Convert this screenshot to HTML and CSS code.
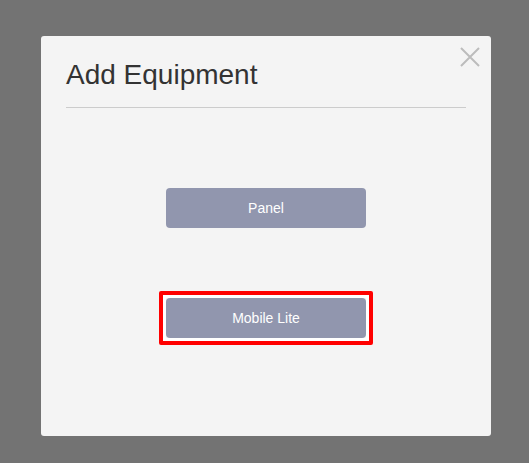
FILE: index.html
```html
<!DOCTYPE html>
<html>
<head>
<meta charset="utf-8">
<link rel="stylesheet" href="styles.css">
</head>
<body>
<div class="modal">
  <button class="close" aria-label="Close">
    <svg width="20" height="20" viewBox="0 0 20 20"><path d="M1 1 L19 19 M19 1 L1 19" stroke="#bcbcbc" stroke-width="2" fill="none"/></svg>
  </button>
  <div class="header"><h1 class="title">Add Equipment</h1></div>
  <div class="actions">
    <button class="btn">Panel</button>
    <button class="btn focused">Mobile Lite</button>
  </div>
</div>
</body>
</html>
```
FILE: styles.css
```css
html, body { margin: 0; height: 100%; }
body {
  background: #737373;
  font-family: "Liberation Sans", Arial, sans-serif;
  padding: 36px 0 0 41px;
  box-sizing: border-box;
}
.modal {
  position: relative;
  width: 450px;
  height: 400px;
  box-sizing: border-box;
  background: #f4f4f4;
  border-radius: 3px;
  padding: 23px 25px 0;
}
.close {
  position: absolute;
  top: 11px;
  right: 11px;
  width: 20px;
  height: 20px;
  padding: 0;
  border: 0;
  background: none;
  display: block;
}
.close svg { display: block; }
.header {
  padding-bottom: 16px;
  border-bottom: 1px solid #cccccc;
}
.title {
  margin: 0;
  font-size: 28px;
  line-height: 32px;
  font-weight: normal;
  color: #333333;
}
.actions {
  display: flex;
  flex-direction: column;
  align-items: center;
  gap: 70px;
  padding-top: 80px;
}
.btn {
  width: 200px;
  height: 40px;
  border: 0;
  border-radius: 4px;
  background: #9196ae;
  color: #ffffff;
  font-family: "Liberation Sans", Arial, sans-serif;
  font-size: 14px;
  padding: 0;
}
.btn.focused {
  position: relative;
  outline: none;
}
.btn.focused::after {
  content: "";
  position: absolute;
  top: -7px;
  left: -7px;
  right: -7px;
  bottom: -7px;
  border: 4px solid #ff0000;
  border-radius: 2px;
  box-shadow: inset 0 0 0 3px #ffffff;
  pointer-events: none;
}
```
